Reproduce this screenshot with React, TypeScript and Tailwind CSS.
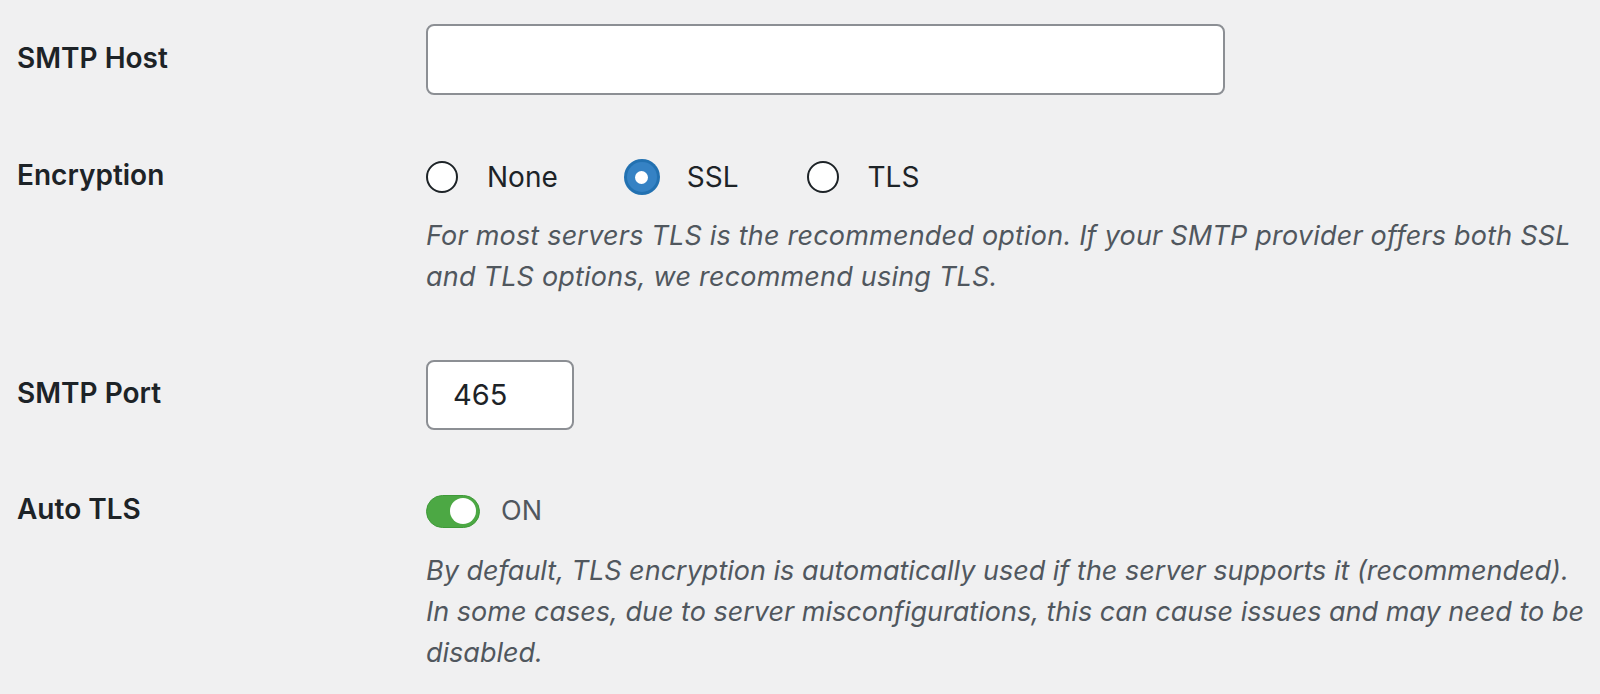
import React from 'react';

const LABEL = "w-[409px] shrink-0 pb-[4px] text-[28px] font-semibold text-[#1d2327]";
const DESC = "text-[27px] leading-[41px] italic text-[#50575e] whitespace-nowrap";

function Radio({ label, checked }: { label: string; checked?: boolean }) {
  return (
    <div className="flex items-center">
      {checked ? (
        <span className="w-[36px] h-[36px] -mx-[2px] rounded-full bg-[#2271b1] flex items-center justify-center">
          <span className="w-[30px] h-[30px] rounded-full bg-[#3582c4] flex items-center justify-center">
            <span className="w-[13px] h-[13px] rounded-full bg-white" />
          </span>
        </span>
      ) : (
        <span className="w-[32px] h-[32px] rounded-full border-2 border-[#1d2327] bg-white" />
      )}
      <span className="ml-[29px] text-[28px] text-[#1d2327]">{label}</span>
    </div>
  );
}

export default function App() {
  return (
    <div className="min-h-[694px] bg-[#f0f0f1] px-[17px] font-['Inter',sans-serif] antialiased">
      <div className="h-[24px]" />
      <div className="flex items-center">
        <div className={LABEL}>SMTP Host</div>
        <div className="w-[799px] h-[71px] bg-white border-2 border-[#8c8f94] rounded-[8px]" />
      </div>

      <div className="flex items-center h-[40px] mt-[62px]">
        <div className={LABEL}>Encryption</div>
        <div className="flex items-center gap-[68px]">
          <Radio label="None" />
          <Radio label="SSL" checked />
          <Radio label="TLS" />
        </div>
      </div>
      <div className="ml-[409px] mt-[18px]">
        <p className={`${DESC} tracking-[0.2px]`}>
          For most servers TLS is the recommended option. If your SMTP provider offers both SSL
          <br />
          and TLS options, we recommend using TLS.
        </p>
      </div>

      <div className="flex items-center mt-[63px]">
        <div className={LABEL}>SMTP Port</div>
        <div className="w-[148px] h-[70px] bg-white border-2 border-[#8c8f94] rounded-[8px] flex items-center px-[25px] text-[29px] text-[#1d2327]">
          465
        </div>
      </div>

      <div className="flex items-center h-[40px] mt-[61px]">
        <div className={LABEL}>Auto TLS</div>
        <div className="flex items-center">
          <span className="w-[54px] h-[33px] rounded-full bg-[#4ca844] border border-[#3f9a39] flex items-center justify-end px-[3px]">
            <span className="w-[26px] h-[26px] rounded-full bg-white" />
          </span>
          <span className="ml-[21px] text-[27px] text-[#50575e]">ON</span>
        </div>
      </div>
      <div className="ml-[409px] mt-[19px]">
        <p className={DESC}>
          By default, TLS encryption is automatically used if the server supports it (recommended).
          <br />
          In some cases, due to server misconfigurations, this can cause issues and may need to be
          <br />
          disabled.
        </p>
      </div>
    </div>
  );
}
